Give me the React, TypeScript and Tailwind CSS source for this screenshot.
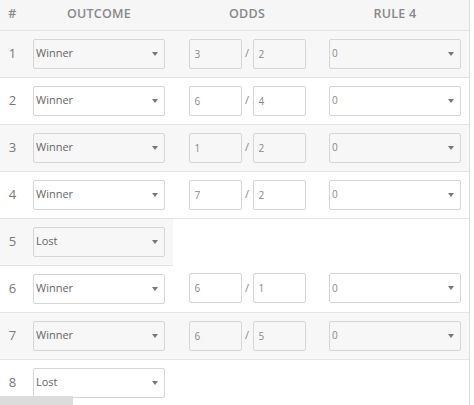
import React from 'react';

type Row = { outcome: 'Winner' | 'Lost'; odds?: [string, string]; rule4?: string };

const rows: Row[] = [
  { outcome: 'Winner', odds: ['3', '2'], rule4: '0' },
  { outcome: 'Winner', odds: ['6', '4'], rule4: '0' },
  { outcome: 'Winner', odds: ['1', '2'], rule4: '0' },
  { outcome: 'Winner', odds: ['7', '2'], rule4: '0' },
  { outcome: 'Lost' },
  { outcome: 'Winner', odds: ['6', '1'], rule4: '0' },
  { outcome: 'Winner', odds: ['6', '5'], rule4: '0' },
  { outcome: 'Lost' },
];

function Select({ value, options, small }: { value: string; options: string[]; small?: boolean }) {
  return (
    <div className="relative h-[30px] w-[132px]">
      <select
        defaultValue={value}
        className={`h-full w-full appearance-none rounded-[2px] border border-[#d6d6d6] bg-transparent pl-[2px] pr-4 outline-none ${
          small ? 'text-[10px] text-[#888]' : 'text-[11px] text-[#666]'
        }`}
      >
        {options.map((o) => (
          <option key={o}>{o}</option>
        ))}
      </select>
      {/* caret */}
      <span className="pointer-events-none absolute right-[7px] top-[13px] h-0 w-0 border-x-[3px] border-t-[4px] border-x-transparent border-t-[#777]" />
    </div>
  );
}

function OddsInput({ value }: { value: string }) {
  return (
    <input
      defaultValue={value}
      className="h-[30px] w-[53px] rounded-[2px] border border-[#d6d6d6] bg-transparent pl-[5px] text-[10px] text-[#888] outline-none"
    />
  );
}

export default function App() {
  return (
    <div
      className="relative h-[405px] w-[474px] overflow-hidden bg-white"
      style={{ fontFamily: '"Open Sans", "Liberation Sans", sans-serif' }}
    >
      <div className="w-[470px] border-r border-[#dedede]">
        <table className="w-[469px] table-fixed border-collapse">
          <colgroup>
            <col className="w-[25px]" />
            <col className="w-[148px]" />
            <col className="w-[148px]" />
            <col className="w-[148px]" />
          </colgroup>
          <thead>
            <tr className="h-[30px] bg-[#f6f6f6] text-[12.5px] font-semibold uppercase tracking-[0.02em] text-[#888]">
              <th className="border-b border-[#e4e4e4] text-center font-semibold">#</th>
              <th className="border-b border-[#e4e4e4] text-center font-semibold">Outcome</th>
              <th className="border-b border-[#e4e4e4] text-center font-semibold">Odds</th>
              <th className="border-b border-[#e4e4e4] text-center font-semibold">Rule 4</th>
            </tr>
          </thead>
          <tbody>
            {rows.map((r, i) => {
              const bg = i % 2 === 0 ? 'bg-[#f7f7f7]' : 'bg-white';
              return (
                <tr key={i} className="h-[47px]">
                  <td className={`border-b border-[#e4e4e4] text-center text-[13px] text-[#777] ${bg}`}>{i + 1}</td>
                  <td className={`border-b border-[#e4e4e4] px-2 ${bg}`}>
                    <Select value={r.outcome} options={['Winner', 'Lost']} />
                  </td>
                  {r.odds && (
                    <>
                      <td className={`border-b border-[#e4e4e4] ${bg}`}>
                        <div className="flex items-center justify-center">
                          <OddsInput value={r.odds[0]} />
                          <span className="w-[11px] text-center text-[11px] text-[#888]">/</span>
                          <OddsInput value={r.odds[1]} />
                        </div>
                      </td>
                      <td className={`border-b border-[#e4e4e4] px-2 ${bg}`}>
                        <Select value={r.rule4 ?? '0'} options={['0', '5', '10', '15']} small />
                      </td>
                    </>
                  )}
                </tr>
              );
            })}
          </tbody>
        </table>
      </div>
      {/* scroll thumb */}
      <div className="absolute bottom-0 left-0 h-[9px] w-[73px] bg-[#dcdcdc]" />
    </div>
  );
}
